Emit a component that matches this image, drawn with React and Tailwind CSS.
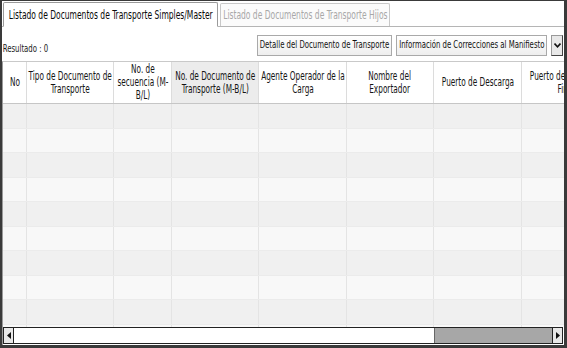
import React from "react";

const HS = 0.68;

const cols = [
  { w: 24, label: "No" },
  { w: 87, label: "Tipo de Documento de Transporte" },
  { w: 58, label: "No. de secuencia (M-B/L)" },
  { w: 87, label: "No. de Documento de Transporte (M-B/L)", sorted: true },
  { w: 88, label: "Agente Operador de la Carga" },
  { w: 87, label: "Nombre del Exportador", tw: 62 },
  { w: 88, label: "Puerto de Descarga" },
  { w: 88, label: "Puerto de Descarga Final" },
];

const rows = Array.from({ length: 10 });

function Narrow({ children, className = "" }) {
  return (
    <span className={`shrink-0 whitespace-nowrap scale-x-[0.7] origin-center ${className}`}>
      {children}
    </span>
  );
}

export default function App() {
  return (
    <div
      className="w-[567px] h-[348px] bg-white border-t border-l-2 border-r-[3px] border-b-[3px] border-[#3a3a3a] flex flex-col overflow-hidden text-[11px] text-[#1a1a1a]"
      style={{ fontFamily: '"DejaVu Sans Condensed", "DejaVu Sans", sans-serif' }}
    >
      {/* tabs */}
      <div className="flex items-end h-[26px] border-b border-[#b5b5b5] pl-[1px] shrink-0">
        <div className="w-[215px] h-[25px] -mb-px flex items-center justify-center bg-white border border-[#9a9a9a] border-b-white text-[12px] text-[#0a0a0a] rounded-t-[2px]">
          <Narrow>Listado de Documentos de Transporte Simples/Master</Narrow>
        </div>
        <div className="w-[170px] h-[23px] ml-[2px] flex items-center justify-center bg-[#fbfbfb] border border-[#c8c8c8] border-b-0 text-[12px] text-[#a8a8a8] rounded-t-[2px]">
          <Narrow>Listado de Documentos de Transporte Hijos</Narrow>
        </div>
      </div>

      {/* toolbar */}
      <div className="flex items-start justify-between h-[34px] shrink-0 pr-[1px]">
        <div className="w-[46px] mt-[14px] flex justify-center text-[11px] text-[#1a1a1a]">
          <Narrow>Resultado : 0</Narrow>
        </div>
        <div className="flex items-center gap-[4px] mt-[8px]">
          <div className="w-[135px] h-[21px] flex items-center justify-center border border-[#a9a9a9] bg-gradient-to-b from-white to-[#eeeeee] text-[#111]">
            <Narrow>Detalle del Documento de Transporte</Narrow>
          </div>
          <div className="w-[151px] h-[21px] flex items-center justify-center border border-[#a9a9a9] bg-gradient-to-b from-white to-[#eeeeee] text-[#111]">
            <Narrow>Información de Correcciones al Manifiesto</Narrow>
          </div>
          <div className="h-[21px] w-[12px] flex items-center justify-center border border-[#999] border-r-[#444] border-b-[#444] bg-[#e8e8e8]">
            <svg width="7" height="5" viewBox="0 0 7 5">
              <path d="M0.5 0.5 L3.5 3.8 L6.5 0.5" stroke="#111" strokeWidth="1.6" fill="none" />
            </svg>
          </div>
        </div>
      </div>

      {/* grid */}
      <div className="flex-1 flex flex-col overflow-hidden border-t border-[#c9c9c9] border-l border-l-[#9a9a9a]">
        <div className="flex h-[42px] shrink-0 border-b border-[#c6c6c6] bg-white">
          {cols.map((c, i) => (
            <div
              key={i}
              style={{ width: c.w }}
              className={`shrink-0 flex items-center justify-center border-r border-[#dcdcdc] ${c.sorted ? "bg-[#ececec]" : "bg-white"}`}
            >
              <div
                style={{ width: (c.tw ?? c.w - 1) / HS }}
                className="shrink-0 text-center leading-[13px] text-[12px] text-[#151515] scale-x-[0.68] origin-center"
              >
                {c.label}
              </div>
            </div>
          ))}
        </div>
        <div className="flex-1 overflow-hidden">
          {rows.map((_, r) => (
            <div
              key={r}
              className={`flex h-[24.5px] border-b border-[#ebebeb] ${r % 2 === 0 ? "bg-[#f0f0f0]" : "bg-[#f8f8f8]"}`}
            >
              {cols.map((c, i) => (
                <div key={i} style={{ width: c.w }} className="shrink-0 border-r border-[#e4e4e4]" />
              ))}
            </div>
          ))}
        </div>
        {/* scrollbar */}
        <div className="h-[17px] shrink-0 flex items-stretch border border-[#222] bg-white mb-[1px] mr-[1px]">
          <div className="w-[10px] flex items-center justify-center border-r border-[#222] bg-[#e8e8e8]">
            <svg width="4" height="7" viewBox="0 0 4 7">
              <path d="M4 0 L0 3.5 L4 7 Z" fill="#111" />
            </svg>
          </div>
          <div className="flex-1 flex">
            <div className="w-[420px] bg-white" />
            <div className="flex-1 bg-[#a7a7a7] border-l border-[#666]" />
          </div>
          <div className="w-[10px] flex items-center justify-center border-l border-[#222] bg-[#e8e8e8]">
            <svg width="4" height="7" viewBox="0 0 4 7">
              <path d="M0 0 L4 3.5 L0 7 Z" fill="#111" />
            </svg>
          </div>
        </div>
      </div>
    </div>
  );
}
